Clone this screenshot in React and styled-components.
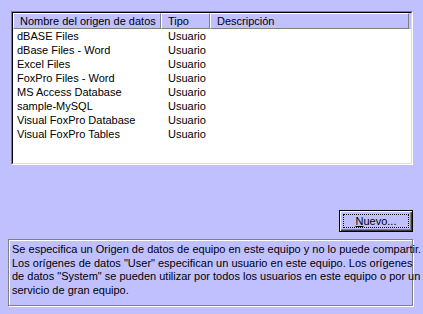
import React from 'react';
import styled, { createGlobalStyle } from 'styled-components';

const lavender = '#c0c0ff';
const shadow = '#808080';

const GlobalStyle = createGlobalStyle`
  body {
    margin: 0;
    background: ${lavender};
    font-family: "Liberation Sans", Arial, sans-serif;
    font-size: 11px;
    color: #000;
  }
`;

const Page = styled.div`
  width: 423px;
  height: 314px;
  display: flex;
  flex-direction: column;
  padding-top: 11px;
  box-sizing: border-box;
`;

const ListOuter = styled.div`
  margin-left: 11px;
  width: 402px;
  height: 154px;
  box-sizing: border-box;
  border-top: 1px solid ${shadow};
  border-left: 1px solid ${shadow};
  border-right: 1px solid #fff;
  border-bottom: 1px solid #fff;
`;

const ListInner = styled.div`
  height: 100%;
  box-sizing: border-box;
  border-top: 1px solid #000;
  border-left: 1px solid #000;
  border-right: 1px solid #dfdfdf;
  border-bottom: 1px solid #dfdfdf;
  background: #fff;
`;

const columns = '148px 49px 199px';

const Header = styled.div`
  display: grid;
  grid-template-columns: ${columns};
  height: 16px;
  background: ${lavender};
`;

const HeaderCell = styled.div`
  box-sizing: border-box;
  height: 16px;
  line-height: 14px;
  padding-left: ${p => p.$pad}px;
  border-top: 1px solid #fff;
  border-left: 1px solid #fff;
  border-right: 1px solid ${shadow};
  border-bottom: 1px solid ${shadow};
  white-space: nowrap;
`;

const Row = styled.div`
  display: grid;
  grid-template-columns: ${columns};
  height: 14px;
  line-height: 14px;
`;

const Cell = styled.div`
  padding-left: ${p => p.$pad}px;
  white-space: nowrap;
`;

const ButtonBar = styled.div`
  display: flex;
  justify-content: flex-end;
  padding-right: 10px;
  margin-top: 45px;
`;

const Button = styled.button`
  width: 74px;
  height: 22px;
  padding: 3px;
  box-sizing: border-box;
  background: ${lavender};
  border: 1px solid #000;
  box-shadow: inset 1px 1px 0 #fff, inset -1px -1px 0 #404040, inset -2px -2px 0 ${shadow};
  font: inherit;
  display: flex;
`;

const Focus = styled.span`
  flex: 1;
  border: 1px dotted #000;
  display: flex;
  align-items: center;
  justify-content: center;
  line-height: 12px;
`;

const InfoBox = styled.div`
  margin: 7px 10px 0 8px;
  height: 67px;
  box-sizing: border-box;
  padding: 3px 3px;
  border: 1px solid ${shadow};
  box-shadow: 1px 1px 0 #fff, inset 1px 1px 0 #fff;
  line-height: 13.5px;
  white-space: nowrap;
`;

const sources = [
  'dBASE Files',
  'dBase Files - Word',
  'Excel Files',
  'FoxPro Files - Word',
  'MS Access Database',
  'sample-MySQL',
  'Visual FoxPro Database',
  'Visual FoxPro Tables',
];

export default function App() {
  return (
    <Page>
      <GlobalStyle />
      <ListOuter>
        <ListInner>
          <Header>
            <HeaderCell $pad={6}>Nombre del origen de datos</HeaderCell>
            <HeaderCell $pad={6}>Tipo</HeaderCell>
            <HeaderCell $pad={6}>Descripción</HeaderCell>
          </Header>
          {sources.map(name => (
            <Row key={name}>
              <Cell $pad={4}>{name}</Cell>
              <Cell $pad={7}>Usuario</Cell>
              <Cell />
            </Row>
          ))}
        </ListInner>
      </ListOuter>
      <ButtonBar>
        <Button>
          <Focus><u>N</u>uevo...</Focus>
        </Button>
      </ButtonBar>
      <InfoBox>
        Se especifica un Origen de datos de equipo en este equipo y no lo puede compartir.<br />
        Los orígenes de datos "User" especifican un usuario en este equipo. Los orígenes<br />
        de datos "System" se pueden utilizar por todos los usuarios en este equipo o por un<br />
        servicio de gran equipo.
      </InfoBox>
    </Page>
  );
}
